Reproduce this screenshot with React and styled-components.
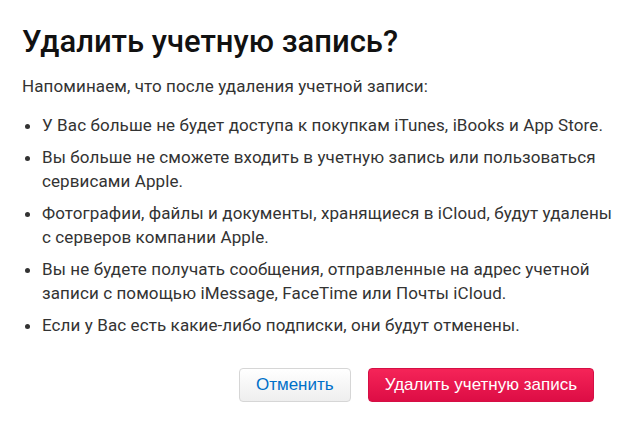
import styled, { createGlobalStyle } from 'styled-components';

const GlobalStyle = createGlobalStyle`
  html, body {
    margin: 0;
    padding: 0;
    background: #ffffff;
  }

  body {
    font-family: Roboto, "Noto Sans", sans-serif;
    -webkit-font-smoothing: antialiased;
  }
`

const items = [
  'У Вас больше не будет доступа к покупкам iTunes, iBooks и App Store.',
  'Вы больше не сможете входить в учетную запись или пользоваться сервисами Apple.',
  'Фотографии, файлы и документы, хранящиеся в iCloud, будут удалены с серверов компании Apple.',
  'Вы не будете получать сообщения, отправленные на адрес учетной записи с помощью iMessage, FaceTime или Почты iCloud.',
  'Если у Вас есть какие-либо подписки, они будут отменены.',
]

export default function App() {
  return (
    <Dialog>
      <GlobalStyle />

      <Title>Удалить учетную запись?</Title>

      <Lead>Напоминаем, что после удаления учетной записи:</Lead>

      <List>
        {items.map((text) => (
          <Item key={text}>
            <Dot />
            <span>{text}</span>
          </Item>
        ))}
      </List>

      <Actions>
        <Button>Отменить</Button>
        <Button danger>Удалить учетную запись</Button>
      </Actions>
    </Dialog>
  )
}

const Dialog = styled.div`
  width: 631px;
  height: 429px;
  box-sizing: border-box;
  padding: 24px 12px 0 22px;
  color: #333333;
`

const Title = styled.h1`
  margin: 0;
  font-size: 31px;
  line-height: 36px;
  font-weight: 500;
  color: #111111;
`

const Lead = styled.p`
  margin: 14px 0 0;
  font-size: 17px;
  line-height: 24px;
  letter-spacing: 0.1px;
`

const List = styled.ul`
  list-style: none;
  margin: 15px 0 0;
  padding: 0;

  display: flex;
  flex-direction: column;
  gap: 8px;
`

const Item = styled.li`
  display: flex;
  align-items: flex-start;
  font-size: 17px;
  line-height: 24px;
  letter-spacing: 0.1px;
`

const Dot = styled.i`
  flex: none;
  width: 20px;
  height: 24px;
  display: flex;
  align-items: center;

  &::after {
    content: '';
    width: 5px;
    height: 5px;
    margin: 3px 0 0 3px;
    border-radius: 50%;
    background: #333333;
  }
`

const Actions = styled.div`
  display: flex;
  justify-content: flex-end;
  gap: 17px;
  margin-top: 31px;
  padding-right: 25px;
`

const Button = styled.button`
  height: 34px;
  box-sizing: border-box;
  padding: 0 16px;
  border-radius: 4px;
  font-family: "Liberation Sans", Arial, sans-serif;
  font-size: 17px;
  cursor: pointer;

  color: ${(p) => (p.danger ? '#ffffff' : '#0070c9')};
  border: 1px solid ${(p) => (p.danger ? '#d50f45' : '#d6d6d6')};
  background: ${(p) =>
    p.danger
      ? 'linear-gradient(#f52458, #dd0d45)'
      : 'linear-gradient(#ffffff, #eeeeee)'};
`
